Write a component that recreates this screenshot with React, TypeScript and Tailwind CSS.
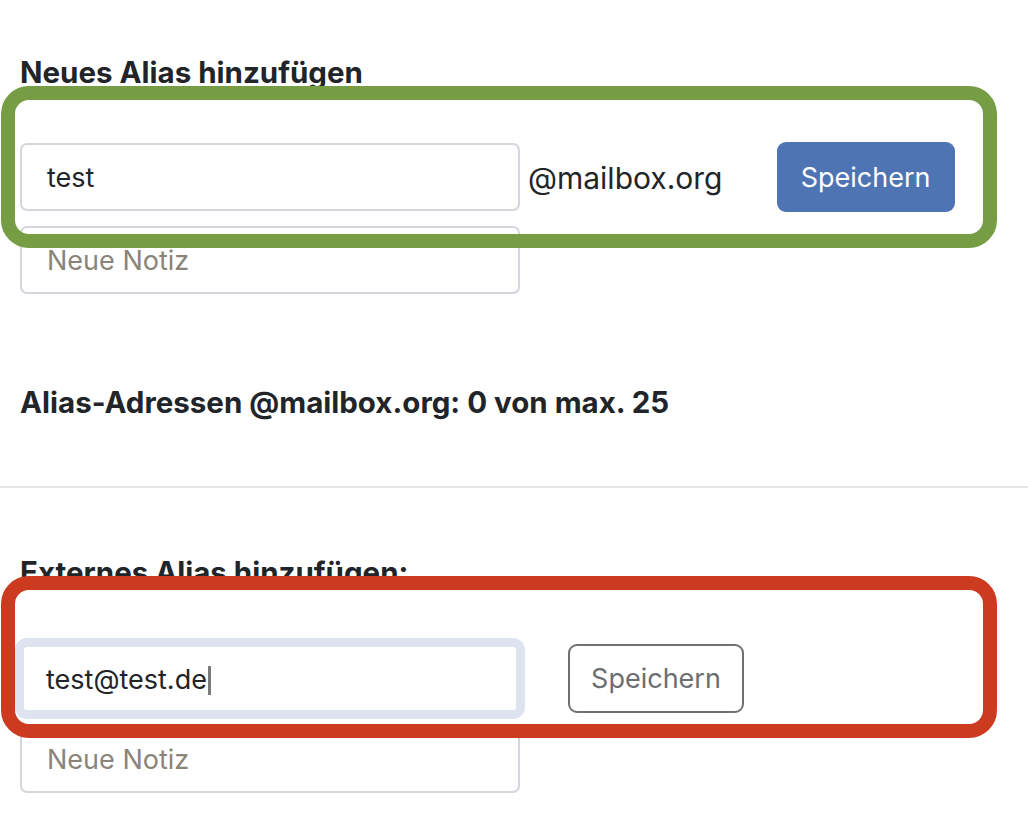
import React from "react";

const FakeInput: React.FC<{ value?: string; placeholder?: string; className?: string; caret?: boolean }> = ({
  value,
  placeholder,
  className = "",
  caret,
}) => {
  return (
    <div className={`w-[500px] flex items-center rounded-[7px] bg-white pt-[3px] text-[27px] ${className}`}>
      {value ? (
        <span className="text-[#212529]">{value}</span>
      ) : (
        <span className="text-[#8a8478]">{placeholder}</span>
      )}
      {caret && <span className="inline-block w-[3px] h-[29px] bg-[#7b7b7b] ml-[1px]" />}
    </div>
  );
};

const App: React.FC = () => {
  return (
    <div className="relative w-[1028px] h-[820px] overflow-hidden bg-white font-['Inter',sans-serif] text-[#212529]">
      <div className="px-[20px] pt-[54px]">
        <h2 className="text-[29.5px] font-bold leading-[36px]">Neues Alias hinzufügen</h2>
        <div className="mt-[52px] flex items-center">
          <FakeInput value="test" className="h-[68px] border-2 border-[#d3d6da] pl-[25px]" />
          <span className="ml-[8px] pt-[2px] text-[30px] text-[#212529]">@mailbox.org</span>
          <button className="ml-[54px] h-[70px] w-[178px] rounded-[9px] bg-[#4f74b3] pt-[2px] text-[27px] text-white">
            Speichern
          </button>
        </div>
        <FakeInput placeholder="Neue Notiz" className="mt-[14px] h-[68px] border-2 border-[#d3d6da] pl-[25px]" />

        <h3 className="mt-[90px] text-[29.5px] font-bold leading-[36px]">
          Alias-Adressen @mailbox.org: 0 von max. 25
        </h3>
      </div>

      <div className="mt-[66px] h-[2px] w-full bg-[#e6e6e2]" />

      <div className="px-[20px] pt-[66px]">
        <h3 className="text-[29.5px] font-bold leading-[36px]">Externes Alias hinzufügen:</h3>
        <div className="mt-[53px] flex items-center">
          <FakeInput
            value="test@test.de"
            caret
            className="h-[71px] border-4 border-[#dde4f0] pl-[22px] shadow-[0_0_0_5px_#dde4f0]"
          />
          <button className="ml-[48px] h-[69px] w-[176px] rounded-[9px] border-2 border-[#6f7174] bg-white pt-[2px] text-[27px] text-[#6c6e72]">
            Speichern
          </button>
        </div>
        <FakeInput placeholder="Neue Notiz" className="mt-[11px] h-[68px] border-2 border-[#d3d6da] pl-[25px]" />
      </div>

      {/* annotation frames drawn over the form */}
      <div className="absolute left-[1px] top-[86px] h-[162px] w-[996px] rounded-[28px] border-[14px] border-[#769d43]" />
      <div className="absolute left-[1px] top-[576px] h-[162px] w-[996px] rounded-[28px] border-[14px] border-[#cc3a1f]" />
    </div>
  );
};

export default App;
